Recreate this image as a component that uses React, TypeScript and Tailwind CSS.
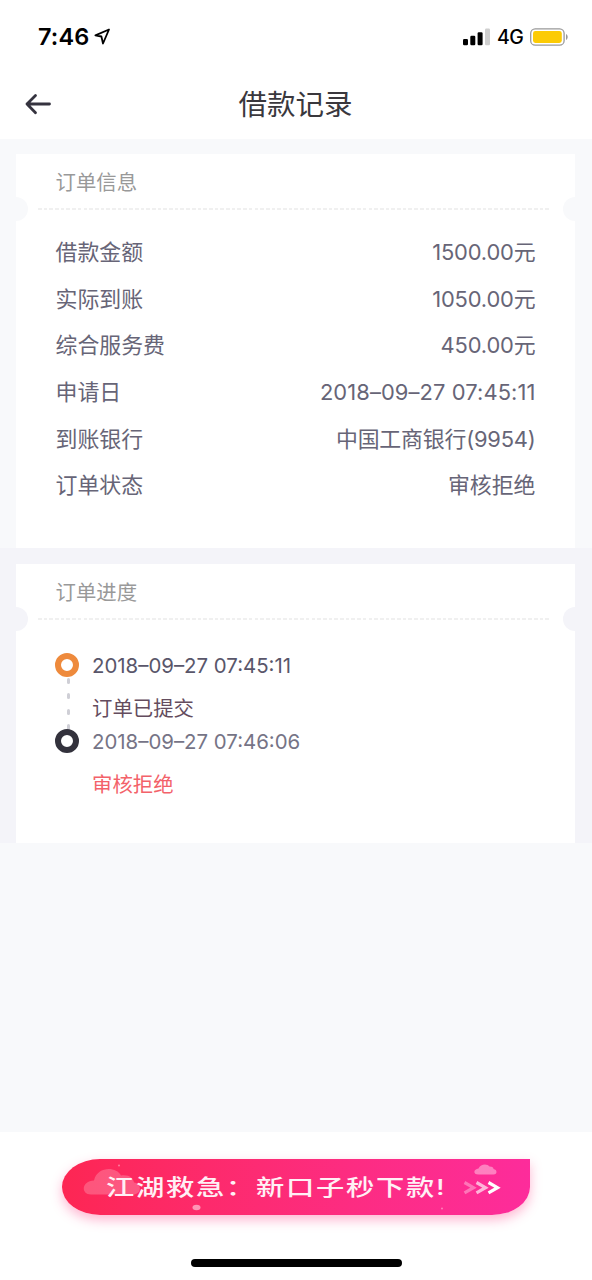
import type { ReactNode } from 'react';

interface Detalhe {
  label: string;
  value: string;
  espaco: string;
}

interface Etapa {
  data: string;
  texto: string;
  corIcone: string;
  corData: string;
  corTexto: string;
}

const detalhes: Detalhe[] = [
  { label: '借款金额', value: '1500.00元', espaco: 'tracking-[-0.15px]' },
  { label: '实际到账', value: '1050.00元', espaco: 'tracking-[-0.15px]' },
  { label: '综合服务费', value: '450.00元', espaco: 'tracking-[-0.15px]' },
  { label: '申请日', value: '2018–09–27 07:45:11', espaco: 'tracking-[0.1px]' },
  { label: '到账银行', value: '中国工商银行(9954)', espaco: 'tracking-[-0.2px]' },
  { label: '订单状态', value: '审核拒绝', espaco: 'tracking-normal' },
];

const etapas: Etapa[] = [
  {
    data: '2018–09–27 07:45:11',
    texto: '订单已提交',
    corIcone: 'border-[#ee8a3c]',
    corData: 'text-[#59566a]',
    corTexto: 'text-[#644c5e]',
  },
  {
    data: '2018–09–27 07:46:06',
    texto: '审核拒绝',
    corIcone: 'border-[#33323c]',
    corData: 'text-[#767486]',
    corTexto: 'text-[#f3626a]',
  },
];

function StatusBar() {
  return (
    <div className="flex h-[70px] items-center justify-between pt-[3px] pr-[24px] pl-[38px] text-black">
      <div className="flex items-center gap-[5px]">
        <span className="text-[23.5px] leading-none font-semibold tracking-[0.1px]">7:46</span>
        <svg width="17" height="17" viewBox="0 0 17 17" fill="none" className="-mt-px">
          <path
            d="M15 1.5 1.4 7.3l6 1.2 1.6 7z"
            stroke="currentColor"
            strokeWidth="1.8"
            strokeLinejoin="round"
          />
        </svg>
      </div>
      <div className="flex items-center">
        <svg width="28" height="18" viewBox="0 0 28 18">
          <rect x="0" y="11" width="5" height="6.3" rx="1.2" />
          <rect x="7.3" y="7.7" width="5" height="9.6" rx="1.2" />
          <rect x="14.6" y="4.3" width="5" height="13" rx="1.2" />
          <rect x="22" y="0.6" width="5" height="16.7" rx="1.2" fill="#cfcfcf" />
        </svg>
        <span className="ml-[6px] w-[33px] pt-[2px] text-[19.5px] leading-none font-medium tracking-[-0.5px]">
          4G
        </span>
        <svg width="38" height="18" viewBox="0 0 38 18">
          <rect x="0.7" y="0.8" width="33.4" height="16.4" rx="4.5" fill="#fff" stroke="#999" strokeWidth="1.3" />
          <rect x="3" y="3" width="28.8" height="12" rx="2.4" fill="#fccb05" />
          <path d="M36 6v6c1-.6 1.7-1.7 1.7-3S37 6.6 36 6z" fill="#999" />
        </svg>
      </div>
    </div>
  );
}

function Header() {
  return (
    <header className="flex h-[69px] items-center pb-px">
      <svg width="28" height="24" viewBox="0 0 28 24" fill="none" className="ml-[24px]">
        <path
          d="M11.5 3.5 3 12l8.5 8.8M3 12h22.500"
          stroke="#35333f"
          strokeWidth="2.8"
          strokeLinecap="round"
          strokeLinejoin="round"
        />
      </svg>
      <h1 className="mr-[53px] flex-1 pt-[3px] text-center text-[28.5px] leading-none text-[#3a383d]">
        借款记录
      </h1>
    </header>
  );
}

function Card({ titulo, corEntalhe, children }: { titulo: string; corEntalhe: string; children: ReactNode }) {
  return (
    <section className="relative h-full overflow-hidden bg-white">
      <div className="flex h-[54px] items-center pt-[4px] pl-[39.5px] text-[20.4px] text-[#999]">
        {titulo}
      </div>
      <div className="mr-6 ml-[22px] h-[1.5px] bg-[repeating-linear-gradient(90deg,#f0f0f0_0_3.6px,transparent_3.6px_5.7px)]" />
      <span className={`absolute top-[43px] -left-3 size-6 rounded-full ${corEntalhe}`} />
      <span className={`absolute top-[43px] -right-3 size-6 rounded-full ${corEntalhe}`} />
      {children}
    </section>
  );
}

function Banner() {
  return (
    <div className="relative mx-auto mt-[27px] h-14 w-[468px] rounded-[38px/28px] rounded-tr-none bg-linear-to-r from-[#fd2653] to-[#fd2c9b] shadow-[0_5px_12px_rgba(255,50,125,0.35)]">
      <svg width="468" height="56" viewBox="0 0 468 56" className="absolute inset-0" fill="#fff">
        <path
          d="M29 35.5c-10 0-10-13.5 3-14 3-14 22-14.5 27-5 9-1 12 3 13 7 8 1 8 12-1 12z"
          opacity="0.22"
        />
        <path d="M416.5 15.5c-6 0-5-5.5 0-6 2-5 9-5 11-2 3 0 4 1 4 2.5 4 .5 4 5.5 0 5.5z" opacity="0.4" />
        <ellipse cx="134.5" cy="48.5" rx="4" ry="2.7" opacity="0.5" />
        <circle cx="57" cy="6.5" r="1" opacity="0.4" />
        <circle cx="380" cy="49.5" r="1" opacity="0.4" />
        <g fill="none" stroke="#fff" strokeWidth="3.2">
          <path d="m402.5 23.5 9 5.2-9 5.2" opacity="0.35" />
          <path d="m414.5 23.5 9 5.2-9 5.2" opacity="0.65" />
          <path d="m426.5 23.5 9 5.2-9 5.2" />
        </g>
      </svg>
      <span className="relative ml-[44px] inline-block origin-left scale-x-[1.285] text-[22px] leading-[57px] font-medium tracking-[1.35px] whitespace-nowrap text-[#fff0f5]">
        江湖救急：新口子秒下款!
      </span>
    </div>
  );
}

export default function App() {
  return (
    <div className="flex h-[1280px] w-full flex-col overflow-hidden bg-[#f8f9fb] font-[Inter,'Noto_Sans_CJK_SC',sans-serif]">
      <div className="h-[139px] shrink-0 bg-white">
        <StatusBar />
        <Header />
      </div>

      <div className="h-[409px] shrink-0 pt-[15px] pr-[17px] pl-4">
        <Card titulo="订单信息" corEntalhe="bg-[#f8f9fb]">
          <dl className="pt-[19.5px] pr-[39.5px] pl-[39.5px] text-[21.9px] text-[#676577]">
            {detalhes.map((item) => (
              <div key={item.label} className="flex h-[46.7px] items-center justify-between">
                <dt>{item.label}</dt>
                <dd className={item.espaco}>{item.value}</dd>
              </div>
            ))}
          </dl>
        </Card>
      </div>

      <div className="h-[295px] shrink-0 bg-[#f4f4f9] pt-4 pr-[17px] pl-4">
        <Card titulo="订单进度" corEntalhe="bg-[#f4f4f9]">
          <ol className="pt-[21px] pl-[39px] text-[20.4px]">
            {etapas.map((etapa, i) => (
              <li key={etapa.data} className="relative flex h-[76.5px] gap-[13px]">
                {i < etapas.length - 1 && (
                  <span className="absolute top-[37px] left-[12px] flex flex-col gap-[9.5px]">
                    {[0, 1, 2, 3].map((n) => (
                      <span key={n} className="h-[6px] w-[3px] rounded-full bg-[#cfcfd6]" />
                    ))}
                  </span>
                )}
                <span
                  className={`relative mt-[12px] size-6 shrink-0 rounded-full border-[6.5px] bg-white ${etapa.corIcone}`}
                />
                <div>
                  <p className={`flex h-[50px] items-center pt-px ${etapa.corData}`}>{etapa.data}</p>
                  <p className={`flex h-[36px] items-center pt-px ${etapa.corTexto}`}>{etapa.texto}</p>
                </div>
              </li>
            ))}
          </ol>
        </Card>
      </div>

      <footer className="mt-auto flex h-[148px] shrink-0 flex-col bg-white">
        <Banner />
        <div className="mx-auto mt-auto mb-[13px] h-[8px] w-[211px] rounded-full bg-black" />
      </footer>
    </div>
  );
}
